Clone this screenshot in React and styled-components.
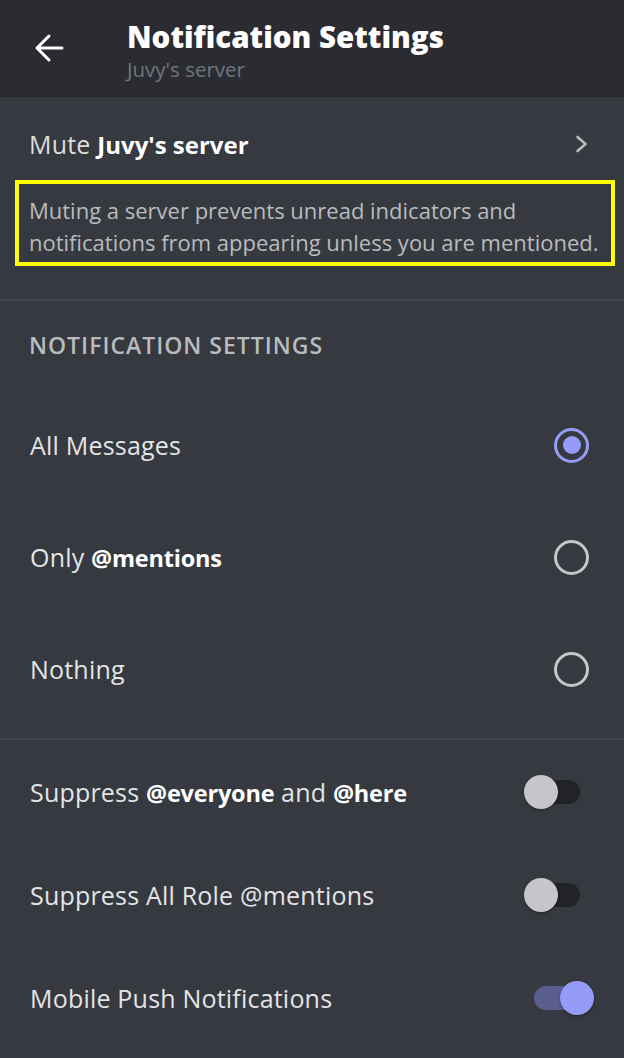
import React from 'react';
import styled, { createGlobalStyle } from 'styled-components';

const Global = createGlobalStyle`
  body {
    margin: 0;
    background: #36393f;
    font-family: 'Open Sans', 'Noto Sans', sans-serif;
  }
`;

const Page = styled.div`
  width: 624px;
  min-height: 1058px;
  background: #36393f;
  display: flex;
  flex-direction: column;
`;

const Header = styled.header`
  height: 97px;
  background: #2b2c31;
  border-bottom: 1px solid #26272b;
  display: flex;
  align-items: flex-start;
  padding-left: 34px;
  box-sizing: border-box;
`;

const Back = styled.div`
  width: 30px;
  height: 30px;
  margin-top: 33px;
  display: flex;
`;

const TitleBlock = styled.div`
  margin-left: 63px;
  margin-top: 18px;
  display: flex;
  flex-direction: column;
`;

const Title = styled.h1`
  margin: 0;
  color: #ffffff;
  font-size: 29.5px;
  font-weight: 800;
  line-height: 38px;
`;

const Subtitle = styled.div`
  color: #72767d;
  font-size: 20.5px;
  line-height: 26px;
`;

const MuteSection = styled.section`
  padding: 15px 0 0;
  display: flex;
  flex-direction: column;
`;

const MuteRow = styled.div`
  height: 64px;
  display: flex;
  align-items: center;
  justify-content: space-between;
  padding: 0 36px 0 29px;
  color: #dcddde;
  font-size: 25px;
  letter-spacing: 0.2px;
  b { color: #fff; font-weight: 700; font-size: 24px; letter-spacing: 0; }
`;

const Hint = styled.p`
  margin: 4px 9px 33px 15px;
  border: 4px solid #ffff00;
  padding: 10px 6px 4px 10px;
  color: #b9bbbe;
  font-size: 22px;
  line-height: 32px;
`;

const Divider = styled.div`
  height: 2px;
  background: #41444b;
`;

const SectionTitle = styled.h2`
  margin: 30px 0 30px 29px;
  color: #b9bbbe;
  font-size: 23px;
  font-weight: 600;
  line-height: 28px;
  letter-spacing: 1px;
`;

const Row = styled.div`
  height: ${p => p.$h}px;
  display: flex;
  align-items: center;
  justify-content: space-between;
  padding: 0 ${p => p.$pr}px 0 30px;
  color: #e3e4e6;
  font-size: 25px;
  letter-spacing: 0.2px;
  b { color: #fff; font-weight: 700; font-size: 23.5px; letter-spacing: -0.2px; }
`;

const RadioList = styled.div`
  display: flex;
  flex-direction: column;
  margin-bottom: 13px;
`;

const Radio = styled.div`
  width: 35px;
  height: 35px;
  box-sizing: border-box;
  border-radius: 50%;
  border: 3px solid ${p => (p.$on ? '#949cf7' : '#c4c6c9')};
  display: flex;
  align-items: center;
  justify-content: center;
  &::after {
    content: '';
    display: ${p => (p.$on ? 'block' : 'none')};
    width: 18px;
    height: 18px;
    border-radius: 50%;
    background: #949cf7;
  }
`;

const Switch = styled.div`
  position: relative;
  width: 60px;
  height: 34px;
`;

const Track = styled.div`
  position: absolute;
  left: ${p => (p.$on ? 4 : 0)}px;
  right: ${p => (p.$on ? 4 : 10)}px;
  top: 5px;
  height: 24px;
  border-radius: 12px;
  background: ${p => (p.$on ? '#5a5e8e' : '#222327')};
`;

const Knob = styled.div`
  position: absolute;
  top: 0;
  ${p => (p.$on ? 'right: -4px;' : 'left: -6px;')}
  width: 34px;
  height: 34px;
  border-radius: 50%;
  background: ${p => (p.$on ? '#949cf7' : '#c4c6c9')};
  box-shadow: 0 1px 3px rgba(0, 0, 0, 0.35);
`;

const Toggle = ({ on }) => (
  <Switch>
    <Track $on={on} />
    <Knob $on={on} />
  </Switch>
);

export default function App() {
  return (
    <Page>
      <Global />
      <Header>
        <Back>
          <svg width="30" height="30" viewBox="0 0 30 30" fill="none" stroke="#fff" strokeWidth="3" strokeLinecap="round" strokeLinejoin="round">
            <path d="M3 15 H28 M15 3 L3 15 L15 27" />
          </svg>
        </Back>
        <TitleBlock>
          <Title>Notification Settings</Title>
          <Subtitle>Juvy's server</Subtitle>
        </TitleBlock>
      </Header>

      <MuteSection>
        <MuteRow>
          <span>Mute <b>Juvy's server</b></span>
          <svg width="13" height="18" viewBox="0 0 13 18" fill="none" stroke="#b9bbbe" strokeWidth="2.6" strokeLinecap="round" strokeLinejoin="round">
            <path d="M2.5 2 L10.5 9 L2.5 16" />
          </svg>
        </MuteRow>
        <Hint>
          Muting a server prevents unread indicators and notifications from appearing unless you are mentioned.
        </Hint>
      </MuteSection>

      <Divider />

      <SectionTitle>NOTIFICATION SETTINGS</SectionTitle>
      <RadioList>
        <Row $h={112} $pr={35}>
          <span>All Messages</span>
          <Radio $on />
        </Row>
        <Row $h={112} $pr={35}>
          <span>Only <b>@mentions</b></span>
          <Radio />
        </Row>
        <Row $h={112} $pr={35}>
          <span>Nothing</span>
          <Radio />
        </Row>
      </RadioList>

      <Divider />

      <Row $h={103} $pr={34}>
        <span>Suppress <b>@everyone</b> and <b>@here</b></span>
        <Toggle />
      </Row>
      <Row $h={103} $pr={34}>
        <span>Suppress All Role @mentions</span>
        <Toggle />
      </Row>
      <Row $h={103} $pr={34}>
        <span>Mobile Push Notifications</span>
        <Toggle on />
      </Row>
    </Page>
  );
}
